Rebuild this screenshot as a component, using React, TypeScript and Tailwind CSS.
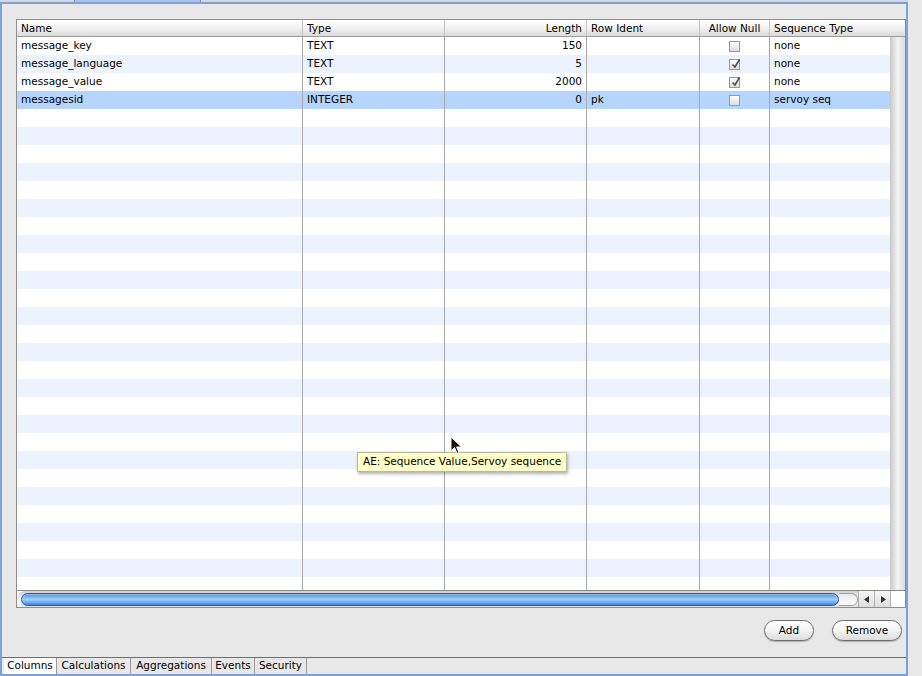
import React from "react";

interface Column {
	name: string;
	type: string;
	length: number;
	rowIdent: string;
	allowNull: boolean;
	sequence: string;
}

const columns: Column[] = [
	{ name: "message_key", type: "TEXT", length: 150, rowIdent: "", allowNull: false, sequence: "none" },
	{ name: "message_language", type: "TEXT", length: 5, rowIdent: "", allowNull: true, sequence: "none" },
	{ name: "message_value", type: "TEXT", length: 2000, rowIdent: "", allowNull: true, sequence: "none" },
	{ name: "messagesid", type: "INTEGER", length: 0, rowIdent: "pk", allowNull: false, sequence: "servoy seq" },
];

const SELECTED = 3;
const ROW_COUNT = 31;

function Checkbox({ checked }: { checked: boolean }) {
	return (
		<div className="w-[11px] h-[11px] border border-[#9a9a9a] bg-gradient-to-b from-white to-[#dcdcdc] relative">
			{checked && (
				<svg className="absolute left-[1px] top-[-2px]" width="10" height="11" viewBox="0 0 10 11">
					<path d="M1.5 6.5 L4 9 L8.5 1.5" fill="none" stroke="#4a4a4a" strokeWidth="1.6" />
				</svg>
			)}
		</div>
	);
}

function HeaderCell({
	children,
	className = "",
}: {
	children?: React.ReactNode;
	className?: string;
}) {
	return (
		<div className={`h-full flex items-center px-[4px] border-r border-[#c4c4c4] ${className}`}>
			{children}
		</div>
	);
}

export default function App() {
	return (
		<div className="relative w-[922px] h-[676px] overflow-hidden bg-[#e8e8e8] text-[10.5px] text-black font-['DejaVu_Sans',sans-serif]">
			{/* leftover of the outer tab strip */}
			<div className="flex h-[2px]">
				<div className="w-[75px] bg-[#d6d6d6] border-r border-[#8c8c8c]" />
				<div className="w-[125px] bg-[#a9c3ef]" />
				<div className="w-[708px] bg-[#d6d6d6] border-l border-[#8c8c8c]" />
			</div>

			<div className="w-[908px] h-[674px] border-2 border-[#7ba1e0] flex flex-col">
				{/* table */}
				<div className="ml-[14px] mt-[15px] w-[890px] h-[589px] border border-[#8e8e8e] bg-white flex flex-col">
					<div className="h-[17px] flex shrink-0 bg-gradient-to-b from-white via-[#f2f2f2] to-[#dadada] border-b border-[#9c9c9c]">
						<HeaderCell className="w-[286px] pt-[1px]">Name</HeaderCell>
						<HeaderCell className="w-[142px] pt-[1px]">Type</HeaderCell>
						<HeaderCell className="w-[142px] pt-[1px] justify-end">Length</HeaderCell>
						<HeaderCell className="w-[113px] pt-[1px]">Row Ident</HeaderCell>
						<HeaderCell className="w-[70px] pt-[1px] justify-center">Allow Null</HeaderCell>
						<HeaderCell className="w-[120px] pt-[1px] border-r-0">Sequence Type</HeaderCell>
						<div className="flex-1" />
					</div>

					<div className="flex flex-1 overflow-hidden">
						<div className="w-[873px] overflow-hidden">
							{Array.from({ length: ROW_COUNT }).map((_, i) => {
								const col = columns[i];
								const bg =
									i === SELECTED ? "bg-[#b5d5fe]" : i % 2 === 1 ? "bg-[#edf3fe]" : "bg-white";
								return (
									<div key={i} className={`h-[18px] flex ${bg}`}>
										<div className="w-[286px] px-[4px] flex items-center border-r border-[#a8a8a8]">
											{col?.name}
										</div>
										<div className="w-[142px] px-[4px] flex items-center border-r border-[#a8a8a8]">
											{col?.type}
										</div>
										<div className="w-[142px] px-[4px] flex items-center justify-end border-r border-[#a8a8a8]">
											{col?.length}
										</div>
										<div className="w-[113px] px-[4px] flex items-center border-r border-[#a8a8a8]">
											{col?.rowIdent}
										</div>
										<div className="w-[70px] flex items-center justify-center border-r border-[#a8a8a8]">
											{col && <Checkbox checked={col.allowNull} />}
										</div>
										<div className="w-[120px] px-[4px] flex items-center">{col?.sequence}</div>
									</div>
								);
							})}
						</div>
						{/* empty vertical scroll track */}
						<div className="flex-1 bg-gradient-to-r from-[#c8c8c8] via-[#f4f4f4] to-[#dcdcdc]" />
					</div>

					{/* horizontal scrollbar */}
					<div className="h-[17px] shrink-0 flex border-t border-[#8a8a8a]">
						<div className="w-[841px] flex items-center bg-gradient-to-b from-[#d0d0d0] via-[#f6f6f6] to-[#e2e2e2] pl-[4px] rounded-l-[8px]">
							<div className="w-[818px] h-[13px] rounded-full border border-[#2a55a8] bg-gradient-to-b from-[#4f8ce0] via-[#a3d0fd] to-[#3f86e8] shadow-[inset_0_1px_0_rgba(255,255,255,0.4)]" />
							<div className="flex-1 h-[13px] rounded-r-full border border-l-0 border-[#a0a0a0] bg-gradient-to-b from-[#e8e8e8] to-white" />
						</div>
						<div className="w-[16px] flex items-center justify-center border-l border-[#b0b0b0] bg-gradient-to-b from-[#f6f6f6] to-[#dedede]">
							<svg width="6" height="7" viewBox="0 0 6 7">
								<path d="M5 0 L5 7 L0 3.5 Z" fill="#333" />
							</svg>
						</div>
						<div className="w-[16px] flex items-center justify-center border-l border-[#b0b0b0] bg-gradient-to-b from-[#f6f6f6] to-[#dedede]">
							<svg width="6" height="7" viewBox="0 0 6 7">
								<path d="M1 0 L1 7 L6 3.5 Z" fill="#333" />
							</svg>
						</div>
						<div className="flex-1 bg-white border-l border-[#b0b0b0]" />
					</div>
				</div>

				{/* buttons */}
				<div className="flex justify-end gap-[18px] pr-[4px] mt-[12px]">
					<button className="w-[50px] h-[21px] rounded-full border border-[#6e6e6e] bg-gradient-to-b from-white via-[#f4f4f4] to-[#dcdcdc] shadow-[0_1px_1px_rgba(0,0,0,0.25)]">
						Add
					</button>
					<button className="w-[70px] h-[21px] rounded-full border border-[#6e6e6e] bg-gradient-to-b from-white via-[#f4f4f4] to-[#dcdcdc] shadow-[0_1px_1px_rgba(0,0,0,0.25)]">
						Remove
					</button>
				</div>

				<div className="flex-1" />

				{/* bottom tab bar */}
				<div className="h-[17px] flex border-t border-[#6f6f6f] pl-[2px]">
					<div className="w-[53px] flex items-center justify-center bg-white border-r border-[#9a9a9a]">
						Columns
					</div>
					<div className="w-[74px] flex items-center justify-center border-r border-[#9a9a9a]">
						Calculations
					</div>
					<div className="w-[81px] flex items-center justify-center border-r border-[#9a9a9a]">
						Aggregations
					</div>
					<div className="w-[43px] flex items-center justify-center border-r border-[#9a9a9a]">
						Events
					</div>
					<div className="w-[52px] flex items-center justify-center border-r border-[#9a9a9a]">
						Security
					</div>
				</div>
			</div>

			{/* tooltip */}
			<div className="absolute left-[357px] top-[452px] h-[20px] px-[5px] flex items-center bg-[#ffffc7] border border-[#b8b8a0] shadow-[1px_2px_3px_rgba(0,0,0,0.3)] whitespace-nowrap">
				AE: Sequence Value,Servoy sequence
			</div>

			{/* mouse pointer */}
			<svg className="absolute left-[450px] top-[436px]" width="13" height="20" viewBox="0 0 13 20">
				<path d="M1 1 L1 15 L4.5 11.5 L7 17.5 L9 16.6 L6.6 11 L11.5 11 Z" fill="#111" stroke="#fff" strokeWidth="1" />
			</svg>
		</div>
	);
}
